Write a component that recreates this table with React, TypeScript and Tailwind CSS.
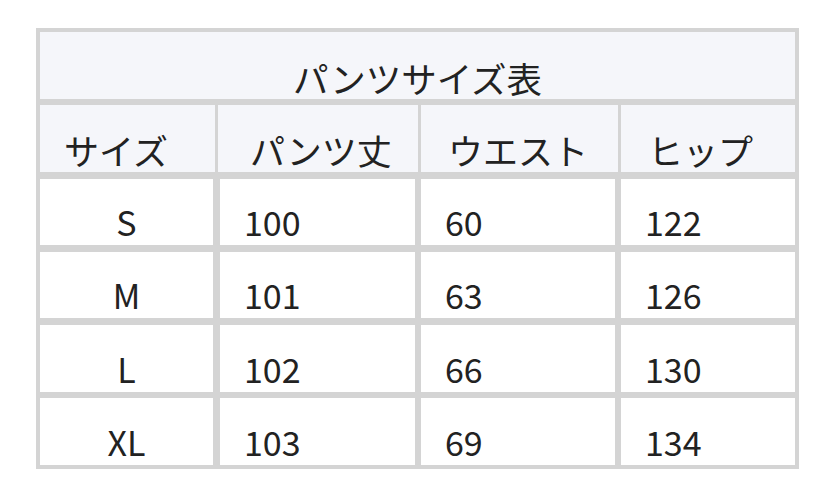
const rows = [
  { size: 'S', length: '100', waist: '60', hip: '122' },
  { size: 'M', length: '101', waist: '63', hip: '126' },
  { size: 'L', length: '102', waist: '66', hip: '130' },
  { size: 'XL', length: '103', waist: '69', hip: '134' },
];

const cols = 'grid grid-cols-[175px_200px_197px_174px] gap-x-[3px]';

const headers = [
  { label: 'サイズ', pad: 'pl-[24px]' },
  { label: 'パンツ丈', pad: 'pl-[32px]' },
  { label: 'ウエスト', pad: 'pl-[27px]' },
  { label: 'ヒップ', pad: 'pl-[27px]' },
];

export default function App() {
  return (
    <div
      className="w-[834px] h-[496px] bg-white pt-[28px] pl-[36px] text-[#222] text-[34px] leading-none"
      style={{ fontFamily: '"Noto Sans CJK JP", "Noto Sans", sans-serif' }}
    >
      <div className="w-[763px] bg-[#d4d4d4] p-[4px] flex flex-col gap-y-[6.8px]">
        <div className="h-[66.5px] bg-[#f5f6fa] flex items-end justify-center pb-[3px] text-[35.5px]">
          パンツサイズ表
        </div>
        <div className={`${cols} h-[66.5px] text-[35px]`}>
          {headers.map((h) => (
            <div key={h.label} className={`bg-[#f5f6fa] flex items-end pb-[5px] ${h.pad}`}>
              {h.label}
            </div>
          ))}
        </div>
        {rows.map((r) => (
          <div key={r.size} className={`${cols} h-[66.5px]`}>
            <div className="bg-white border-r-[2px] border-[#d4d4d4] flex items-end justify-center pb-[6px]">
              {r.size}
            </div>
            <div className="bg-white border-l-[2px] border-r-[3px] border-[#d4d4d4] flex items-end pl-[24px] pb-[6px]">
              {r.length}
            </div>
            <div className="bg-white border-r-[3px] border-[#d4d4d4] flex items-end pl-[24px] pb-[6px]">
              {r.waist}
            </div>
            <div className="bg-white flex items-end pl-[24px] pb-[6px]">{r.hip}</div>
          </div>
        ))}
      </div>
    </div>
  );
}
